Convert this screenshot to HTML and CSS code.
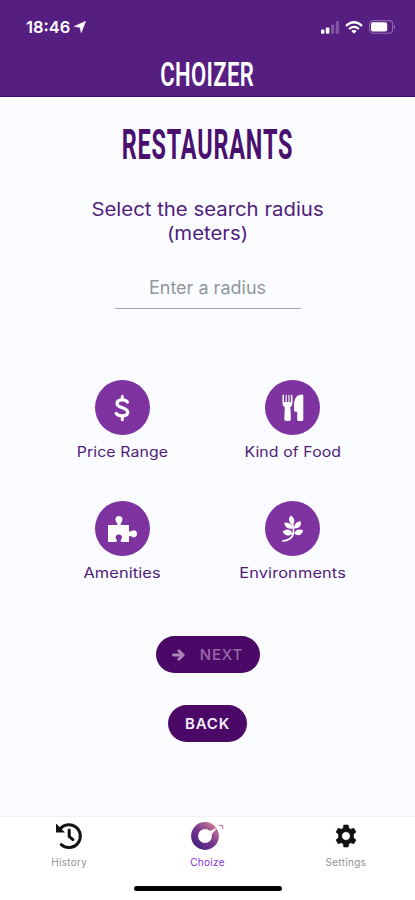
FILE: index.html
```html
<!DOCTYPE html>
<html lang="en">
<head>
<meta charset="UTF-8">
<meta name="viewport" content="width=device-width, initial-scale=1.0">
<title>Choizer</title>
<link rel="stylesheet" href="styles.css">
</head>
<body>

<header class="header">
  <div class="status-bar">
    <div class="status-time">
      <span>18:46</span>
      <svg width="12" height="12" viewBox="0 0 12 12"><path d="M11.6 .3 L7.2 11.6 L6 6.3 L.3 5.4 Z" fill="#fff" stroke="#fff" stroke-width=".6" stroke-linejoin="round"/></svg>
    </div>
    <div class="status-icons">
      <svg width="18" height="13" viewBox="0 0 18 13" fill="#fff">
        <rect x="0" y="8.5" width="3.4" height="4.3" rx="1"/>
        <rect x="4.8" y="6.5" width="3.6" height="6.3" rx="1"/>
        <rect x="10" y="3.5" width="3.2" height="9.3" rx="1" opacity=".25"/>
        <rect x="14.8" y="0" width="3.2" height="12.8" rx="1" opacity=".25"/>
      </svg>
      <svg class="wifi" width="18" height="13" viewBox="0 0 18 13" fill="none" stroke="#fff" stroke-width="2.3">
        <path d="M1 4.8 Q9 -2.4 17 4.8"/>
        <path d="M4.1 8 Q9 3.7 13.9 8"/>
        <path d="M6.3 10 Q9 7.8 11.7 10 L9 12.8 Z" fill="#fff" stroke="none"/>
      </svg>
      <svg width="27" height="14" viewBox="0 0 27 14">
        <rect x=".6" y=".6" width="23" height="12.6" rx="3.5" fill="none" stroke="#8f68ac" stroke-width="1.1"/>
        <rect x="2" y="2.2" width="16.2" height="9.4" rx="1.8" fill="#fff"/>
        <path d="M25 4.8 Q27 7 25 9.2 Z" fill="#a98abf"/>
      </svg>
    </div>
  </div>
  <div class="logo"><span class="logo-text">CHOIZER</span></div>
</header>

<main class="content">
  <h1 class="title"><span class="title-text">RESTAURANTS</span></h1>
  <p class="subtitle">Select the search radius<br>(meters)</p>
  <input type="text" class="radius-input" placeholder="Enter a radius">

  <div class="filters">
    <div class="filter">
      <div class="filter-icon">
        <svg width="17" height="28" viewBox="0 0 16 28" fill="none" stroke="#fff" stroke-width="3.3" stroke-linecap="round">
          <path d="M12.8 8 C11.1 5.2 2.6 4.7 2.6 9.4 C2.6 14.6 13.2 12.8 13.2 18.2 C13.2 23 4.1 22.7 1.8 19.6"/>
          <path d="M7.8 2.2 V5.5 M7.8 22.5 V25.8" stroke-width="3"/>
        </svg>
      </div>
      <span class="filter-label">Price Range</span>
    </div>
    <div class="filter">
      <div class="filter-icon">
        <svg width="22" height="28" viewBox="0 0 22 28" fill="#fff">
          <path d="M.5 1.5 Q.7 .8 1.4 .8 H2 V8 H3.6 V.8 H4.7 V8 H6.4 V.8 H7.5 V8 H8.9 V.8 H9.8 Q10.5 .8 10.5 1.5 V8.5 C10.5 11.5 9.5 12.4 8.4 13.3 L8.9 25 Q8.9 27 7.2 27 H4.1 Q2.3 27 2.3 25 L2.8 13.3 C1.4 12.4 .5 11.5 .5 8.5 Z"/>
          <path d="M19.9 .6 Q21.3 .6 21.3 2 V25.4 Q21.3 27 19.8 27 H16.8 Q15.2 27 15.2 25.4 V17.8 H13.4 Q12 17.8 12.1 16.4 C11.6 7 12.6 .9 19.9 .6 Z"/>
        </svg>
      </div>
      <span class="filter-label">Kind of Food</span>
    </div>
    <div class="filter">
      <div class="filter-icon">
        <svg width="31" height="28" viewBox="0 0 31 28" fill="#fff">
          <path d="M1 10 H9.6 C11.2 10 10.3 8.4 9.5 7.2 C7.3 3.8 9 1 12 1 C15 1 16.7 3.8 14.5 7.2 C13.7 8.4 13 10 14.6 10 H22 V15.2 C22 17.3 23.5 16.8 25 15.8 C27.5 14.2 30 15.8 30 18.8 C30 21.8 27.5 23.4 25 21.8 C23.5 20.8 22 20.6 22 22.6 V27 H15.2 C13.2 27 13.4 25.5 14.2 24.5 C16 22 14.5 19.5 11.8 19.5 C9.1 19.5 7.7 22 9.4 24.5 C10.2 25.5 10.3 27 8.2 27 H1 Z"/>
        </svg>
      </div>
      <span class="filter-label wide">Amenities</span>
    </div>
    <div class="filter">
      <div class="filter-icon">
        <svg width="22" height="28" viewBox="0 0 22 28">
          <g fill="#fff">
            <path d="M10.2 10 C5.6 6 6.6 3 8.8 .6 C13 3.2 13.4 7.2 10.2 10 Z"/>
            <path d="M10.5 13.5 C6 14.4 2.8 12.4 2.2 7.8 C7.7 7 10.4 9.2 10.5 13.5 Z"/>
            <path d="M12.2 13.5 C11.8 9 14.5 6.8 18.7 6.3 C19.8 10.9 17.2 13.8 12.2 13.5 Z"/>
            <path d="M10.6 18.4 C6.5 21.8 2.8 20.7 .6 16.5 C4.4 13.2 8.6 13.9 10.6 18.4 Z"/>
            <path d="M12.2 18.6 C13.8 14.2 17.5 13.8 21.2 15.5 C19.5 20.5 16.1 21.6 12.2 18.6 Z"/>
          </g>
          <path d="M10.3 8 Q12 14 11.4 18 C10.6 22.8 6 25.8 1 25.8" fill="none" stroke="#fff" stroke-width="1.8" stroke-linecap="round"/>
        </svg>
      </div>
      <span class="filter-label wide">Environments</span>
    </div>
  </div>

  <button class="btn next-btn" disabled>
    <svg width="13" height="12" viewBox="0 0 13 12" fill="none" stroke="#ab85bb" stroke-width="2.8" stroke-linecap="round" stroke-linejoin="round"><path d="M1.4 6 H10.5 M6.8 1.8 L11.2 6 L6.8 10.2"/></svg>
    <span>NEXT</span>
  </button>
  <button class="btn back-btn">BACK</button>
</main>

<nav class="tab-bar">
  <div class="tabs">
    <a class="tab">
      <svg width="28" height="28" viewBox="0 0 28 28" fill="none" stroke="#111" stroke-width="3">
        <path d="M4.2 8.2 A11.4 11.4 0 1 1 6.3 22.6" stroke-linecap="round"/>
        <path d="M1 1.5 L10 10.5 H1 Z" fill="#111" stroke="none"/>
        <path d="M14.2 8 V14.6 L17.9 17.6" stroke-linecap="round"/>
      </svg>
      <span class="tab-label">History</span>
    </a>
    <a class="tab active">
      <svg width="34" height="28" viewBox="0 0 34 28">
        <defs>
          <linearGradient id="ring" x1="0" y1="1" x2=".9" y2="0">
            <stop offset="0" stop-color="#45207f"/>
            <stop offset=".55" stop-color="#7d3a91"/>
            <stop offset="1" stop-color="#c27395"/>
          </linearGradient>
        </defs>
        <circle cx="15" cy="14" r="10.4" fill="none" stroke="url(#ring)" stroke-width="7"/>
        <path d="M14 9.4 C18 10.2 23 8 28.2 5 C25.4 8 23 10 20.8 14 Z" fill="#fff"/>
        <path d="M29.2 3.4 H32.7 V6.9" fill="none" stroke="#a96598" stroke-width="1"/>
      </svg>
      <span class="tab-label">Choize</span>
    </a>
    <a class="tab">
      <svg width="28" height="28" viewBox="0 0 28 28">
        <path fill="#111" fill-rule="evenodd" d="M11.8 3 H16.2 L16.8 6.2 L18.8 7.3 L21.8 6.2 L24 10 L21.5 12.2 V15.8 L24 18 L21.8 21.8 L18.8 20.7 L16.8 21.8 L16.2 25 H11.8 L11.2 21.8 L9.2 20.7 L6.2 21.8 L4 18 L6.5 15.8 V12.2 L4 10 L6.2 6.2 L9.2 7.3 L11.2 6.2 Z M14 9.7 A4.3 4.3 0 1 0 14 18.3 A4.3 4.3 0 1 0 14 9.7 Z" stroke="#111" stroke-width=".6" stroke-linejoin="round"/>
      </svg>
      <span class="tab-label">Settings</span>
    </a>
  </div>
  <div class="home-indicator"></div>
</nav>

</body>
</html>
```

FILE: styles.css
```css
:root {
  --headercolor: #561e80;
  --textcolor: #501b79;
  --circlecolor: #7f33a0;
  --buttoncolor: #4c0867;
  --pagecolor: #fafcff;
}

* {
  margin: 0;
  padding: 0;
  box-sizing: border-box;
}

body {
  width: 415px;
  height: 900px;
  display: flex;
  flex-direction: column;
  background-color: var(--pagecolor);
  color: var(--textcolor);
  font-family: Inter, sans-serif;
  overflow: hidden;
}

svg {
  display: block;
  flex: none;
}

/* Header */
.header {
  height: 97px;
  background-color: var(--headercolor);
  border-bottom: 1px solid #430b70;
  color: #fff;
}

.status-bar {
  height: 54px;
  padding: 0 19px 0 26px;
  display: flex;
  align-items: center;
  justify-content: space-between;
}

.status-time {
  display: flex;
  align-items: center;
  gap: 4px;
  font-size: 16.5px;
  font-weight: 600;
}

.status-icons {
  display: flex;
  align-items: center;
  gap: 6px;
}

.logo {
  height: 40px;
  display: flex;
  justify-content: center;
  align-items: center;
}

.logo-text {
  font-family: Roboto, sans-serif;
  font-size: 34px;
  line-height: 40px;
  font-weight: 600;
  letter-spacing: 0.5px;
  transform: scaleX(0.65);
}

/* Main content */
.content {
  flex: 1;
  display: flex;
  flex-direction: column;
  align-items: center;
}

.title {
  height: 50px;
  margin-top: 22px;
  display: flex;
  justify-content: center;
  color: #49106f;
}

.title-text {
  font-family: Roboto, sans-serif;
  font-size: 43px;
  line-height: 50px;
  font-weight: 700;
  letter-spacing: 1.5px;
  transform: scaleX(0.545);
}

.subtitle {
  margin-top: 29px;
  font-size: 18.5px;
  line-height: 23.5px;
  text-align: center;
  transform: scaleX(1.1);
}

.radius-input {
  width: 186px;
  height: 41px;
  margin-top: 23px;
  padding-bottom: 2px;
  border: none;
  border-bottom: 1px solid #9fa3a9;
  background: none;
  font-family: Inter, sans-serif;
  font-size: 18px;
  text-align: center;
}

.radius-input::placeholder {
  color: #92979d;
}

.filters {
  width: 340px;
  margin-top: 71px;
  display: grid;
  grid-template-columns: 1fr 1fr;
  row-gap: 38px;
}

.filter {
  height: 83px;
  display: flex;
  flex-direction: column;
  align-items: center;
}

.filter-icon {
  flex: none;
  width: 55px;
  height: 55px;
  border-radius: 50%;
  background-color: var(--circlecolor);
  display: flex;
  align-items: center;
  justify-content: center;
}

.filter-label {
  margin-top: 7px;
  font-size: 14px;
  line-height: 20px;
  letter-spacing: 0.1px;
  white-space: nowrap;
  transform: scaleX(1.13);
}

.filter-label.wide {
  transform: scaleX(1.17);
}

.btn {
  height: 37px;
  border: none;
  border-radius: 19px;
  background-color: var(--buttoncolor);
  color: #f5effa;
  font-family: Inter, sans-serif;
  font-size: 15px;
  font-weight: 600;
  letter-spacing: 0.8px;
}

.next-btn {
  width: 104px;
  margin-top: 52px;
  display: flex;
  align-items: center;
  justify-content: center;
  gap: 15px;
  color: #966ba9;
  font-weight: 500;
}

.back-btn {
  width: 79px;
  margin-top: 32px;
}

/* Bottom navigation */
.tab-bar {
  height: 84px;
  background-color: #fff;
  border-top: 1px solid #f2f2f5;
}

.tabs {
  height: 69px;
  display: flex;
}

.tab {
  flex: 1;
  padding-top: 5px;
  display: flex;
  flex-direction: column;
  align-items: center;
  color: #929292;
}

.tab.active {
  color: #8931dc;
}

.tab-label {
  margin-top: 5px;
  font-size: 10px;
  line-height: 14px;
  letter-spacing: 0.3px;
}

.home-indicator {
  width: 148px;
  height: 5px;
  margin: 0 auto;
  border-radius: 3px;
  background-color: #000;
}
```
